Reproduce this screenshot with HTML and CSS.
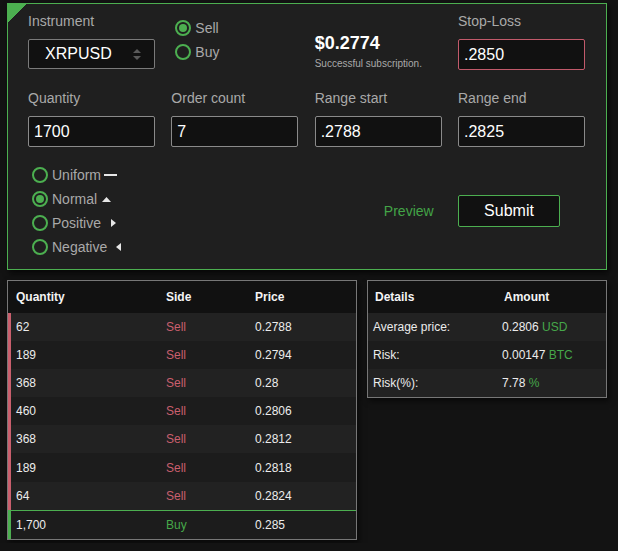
FILE: index.html
```html
<!DOCTYPE html>
<html>
<head>
<meta charset="utf-8">
<link rel="stylesheet" href="styles.css">
</head>
<body>
<div class="page">
  <div class="panel">
    <div class="row row-a">
      <div class="field">
        <div class="label">Instrument</div>
        <div class="select">
          <span>XRPUSD</span>
          <svg class="arrows" width="8" height="11" viewBox="0 0 8 11"><path d="M4 0 L8 4 L0 4 Z M0 7 L8 7 L4 11 Z" fill="#5a5a5a"/></svg>
        </div>
      </div>
      <div class="sides">
        <div class="radio on"><span class="dot"></span><span>Sell</span></div>
        <div class="radio"><span class="dot"></span><span>Buy</span></div>
      </div>
      <div class="quote">
        <div class="price">$0.2774</div>
        <div class="status">Successful subscription.</div>
      </div>
      <div class="field">
        <div class="label">Stop-Loss</div>
        <input class="input stop" type="text" value=".2850">
      </div>
    </div>
    <div class="row row-b">
      <div class="field"><div class="label">Quantity</div><input class="input" type="text" value="1700"></div>
      <div class="field"><div class="label">Order count</div><input class="input" type="text" value="7"></div>
      <div class="field"><div class="label">Range start</div><input class="input" type="text" value=".2788"></div>
      <div class="field"><div class="label">Range end</div><input class="input" type="text" value=".2825"></div>
    </div>
    <div class="row row-c">
      <div class="dist">
        <div class="radio"><span class="dot"></span><span>Uniform</span><svg class="ic ic-uni" width="13" height="2" viewBox="0 0 13 2"><rect width="13" height="2" fill="#e6e6e6"/></svg></div>
        <div class="radio on"><span class="dot"></span><span>Normal</span><svg class="ic ic-up" width="9" height="5" viewBox="0 0 9 5"><path d="M4.5 0 L9 5 L0 5 Z" fill="#e6e6e6"/></svg></div>
        <div class="radio"><span class="dot"></span><span>Positive</span><svg class="ic ic-right" width="5" height="8" viewBox="0 0 5 8"><path d="M0 0 L5 4 L0 8 Z" fill="#e6e6e6"/></svg></div>
        <div class="radio"><span class="dot"></span><span>Negative</span><svg class="ic ic-left" width="5" height="8" viewBox="0 0 5 8"><path d="M5 0 L0 4 L5 8 Z" fill="#e6e6e6"/></svg></div>
      </div>
      <div class="preview">Preview</div>
      <button class="submit">Submit</button>
    </div>
  </div>

  <div class="tables">
    <div class="tbl orders">
      <div class="tr th"><div>Quantity</div><div>Side</div><div>Price</div></div>
      <div class="tr sell"><div>62</div><div class="s">Sell</div><div>0.2788</div></div>
      <div class="tr sell"><div>189</div><div class="s">Sell</div><div>0.2794</div></div>
      <div class="tr sell"><div>368</div><div class="s">Sell</div><div>0.28</div></div>
      <div class="tr sell"><div>460</div><div class="s">Sell</div><div>0.2806</div></div>
      <div class="tr sell"><div>368</div><div class="s">Sell</div><div>0.2812</div></div>
      <div class="tr sell"><div>189</div><div class="s">Sell</div><div>0.2818</div></div>
      <div class="tr sell"><div>64</div><div class="s">Sell</div><div>0.2824</div></div>
      <div class="tr buy"><div>1,700</div><div class="b">Buy</div><div>0.285</div></div>
    </div>
    <div class="tbl details">
      <div class="tr th"><div>Details</div><div>Amount</div></div>
      <div class="tr"><div>Average price:</div><div>0.2806 <span class="g">USD</span></div></div>
      <div class="tr"><div>Risk:</div><div>0.00147 <span class="g">BTC</span></div></div>
      <div class="tr"><div>Risk(%):</div><div>7.78 <span class="g">%</span></div></div>
    </div>
  </div>
</div>
</body>
</html>
```
FILE: styles.css
```css
html, body {
  margin: 0;
  background: #131313;
}
body {
  padding: 3px 7px;
  font-family: "Liberation Sans", Arial, sans-serif;
}
.page {
  width: 600px;
}
.panel {
  box-sizing: border-box;
  width: 600px;
  height: 267px;
  border: 1px solid #4caf50;
  background: linear-gradient(135deg, #4caf50 14.5px, #1f1f1f 14.5px);
  background-origin: border-box;
  box-shadow: 2px 3px 6px rgba(0, 0, 0, 0.7);
  padding: 8px 0 10px 20px;
}
.row {
  display: grid;
  grid-template-columns: 127px 127px 127px 127px;
  column-gap: 16.33px;
}
.row-a {
  align-items: start;
  height: 59px;
}
.row-b {
  margin-top: 18px;
}
.row-c {
  margin-top: 16px;
  height: 96px;
  align-items: center;
}
.label {
  font-size: 14px;
  line-height: 18px;
  color: #a9a9a9;
  margin-bottom: 9px;
}
.select {
  box-sizing: border-box;
  margin-top: 2px;
  height: 30px;
  border: 1px solid #7a7a7a;
  border-radius: 2px;
  background: #111;
  display: flex;
  align-items: center;
  padding: 0 13px 0 16px;
  justify-content: space-between;
  color: #fff;
  font-size: 16px;
}
.input {
  box-sizing: border-box;
  display: block;
  width: 127px;
  height: 31px;
  margin: 0;
  border: 1px solid #8a8a8a;
  border-radius: 2px;
  background: #111;
  color: #fff;
  font-family: "Liberation Sans", Arial, sans-serif;
  font-size: 16px;
  padding: 0 5px;
  outline: none;
}
.input.stop {
  border-color: #c25a6b;
}
.sides {
  padding-top: 4px;
  padding-left: 4px;
}
.radio {
  display: flex;
  align-items: center;
  height: 24px;
  font-size: 14px;
  color: #a9a9a9;
}
.dot {
  box-sizing: border-box;
  width: 16px;
  height: 16px;
  border: 2px solid #4caf50;
  border-radius: 50%;
  margin-right: 4px;
  display: flex;
  align-items: center;
  justify-content: center;
  flex: none;
}
.radio.on .dot::after {
  content: "";
  width: 8px;
  height: 8px;
  border-radius: 50%;
  background: #4caf50;
}
.quote {
  padding-top: 20px;
}
.price {
  font-size: 18px;
  font-weight: bold;
  line-height: 22px;
  color: #fff;
}
.status {
  margin-top: 4px;
  font-size: 10px;
  line-height: 12px;
  color: #a9a9a9;
}
.dist {
  padding-left: 4px;
}
.ic {
  display: block;
  flex: none;
}
.ic-uni { margin-left: 3px; }
.ic-up { margin-left: 5px; }
.ic-right { margin-left: 10px; }
.ic-left { margin-left: 9px; }
.preview {
  grid-column: 3;
  justify-self: end;
  margin-right: 8px;
  font-size: 14px;
  color: #43a447;
}
.submit {
  grid-column: 4;
  box-sizing: border-box;
  width: 102px;
  height: 32px;
  border: 1px solid #4caf50;
  border-radius: 2px;
  background: #111;
  color: #fff;
  font-family: "Liberation Sans", Arial, sans-serif;
  font-size: 16px;
  padding: 0;
}
.tables {
  margin-top: 10px;
  display: flex;
  align-items: flex-start;
  gap: 10px;
}
.tbl {
  box-sizing: border-box;
  border: 1px solid #777;
  background: #1c1c1c;
  font-size: 12px;
  color: #ececec;
  box-shadow: 2px 3px 6px rgba(0, 0, 0, 0.6);
}
.orders {
  width: 350px;
}
.details {
  width: 240px;
}
.tr {
  display: grid;
  align-items: center;
  height: 28.1px;
}
.orders .tr {
  grid-template-columns: 150px 89px 1fr;
}
.orders .tr > div {
  padding-left: 8px;
}
.details .tr {
  grid-template-columns: 129px 1fr;
  height: 28px;
}
.details .tr > div {
  padding-left: 5px;
}
.details .th > div {
  padding-left: 7px;
}
.tr.th {
  height: 32px;
  background: #111;
  font-weight: bold;
  color: #f4f4f4;
}
.tr:nth-child(even) {
  background: #222;
}
.tr:nth-child(odd):not(.th) {
  background: #1c1c1c;
}
.sell {
  box-shadow: inset 3px 0 0 #c95f6d;
}
.buy {
  box-sizing: border-box;
  height: 29px;
  border-top: 1px solid #4caf50;
  box-shadow: inset 3px 0 0 #4caf50;
}
.s { color: #c95f6d; }
.b { color: #46a74a; }
.g { color: #46a74a; }
```
